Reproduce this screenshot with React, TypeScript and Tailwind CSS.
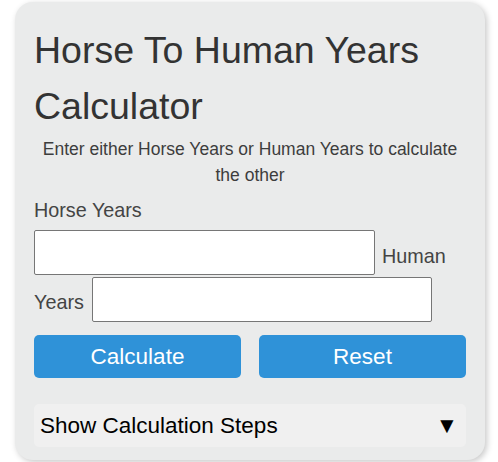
import React from "react";

const App = () => {
  return (
    <div className="min-h-screen bg-white pl-[15px] pt-[2px] font-['Liberation_Sans',Arial,sans-serif]">
      {/* Card */}
      <div className="w-[470px] rounded-[18px] bg-[#eaebeb] px-[19px] pt-[20px] pb-[13px] shadow-[2px_2px_6px_rgba(0,0,0,0.22)]">
        <h1 className="text-[37.5px] leading-[56px] font-normal text-[#333333]">
          Horse To Human Years Calculator
        </h1>
        <p className="mt-[2px] text-center text-[17.5px] leading-[26px] text-[#3d3d3d]">
          Enter either Horse Years or Human Years to calculate the other
        </p>

        {/* Inputs */}
        <label className="mt-[8px] block text-[19.8px] leading-[29px] text-[#444444]">
          Horse Years
        </label>
        <div className="mt-[5px] flex items-end gap-[7px]">
          <input
            type="text"
            className="h-[45px] w-[341px] rounded-[2px] border border-[#767676] bg-white"
          />
          <span className="pb-[4px] text-[19.8px] leading-[29px] text-[#444444]">
            Human
          </span>
        </div>
        <div className="mt-[2px] flex items-end gap-[8px]">
          <span className="pb-[5px] text-[19.8px] leading-[29px] text-[#444444]">
            Years
          </span>
          <input
            type="text"
            className="h-[45px] w-[340px] rounded-[2px] border border-[#767676] bg-white"
          />
        </div>

        {/* Buttons */}
        <div className="mt-[13px] grid grid-cols-2 gap-[18px]">
          <button className="h-[43px] rounded-[5px] bg-[#2f92d8] text-[22.5px] text-white">
            Calculate
          </button>
          <button className="h-[43px] rounded-[5px] bg-[#2f92d8] text-[22.5px] text-white">
            Reset
          </button>
        </div>

        {/* Steps toggle */}
        <div className="mt-[26px] flex h-[43px] items-center justify-between rounded-[5px] bg-[#f0f0f0] pl-[6px] pr-[8px] text-[22.5px] text-black">
          <span>Show Calculation Steps</span>
          <span>▼</span>
        </div>
      </div>
    </div>
  );
};

export default App;
